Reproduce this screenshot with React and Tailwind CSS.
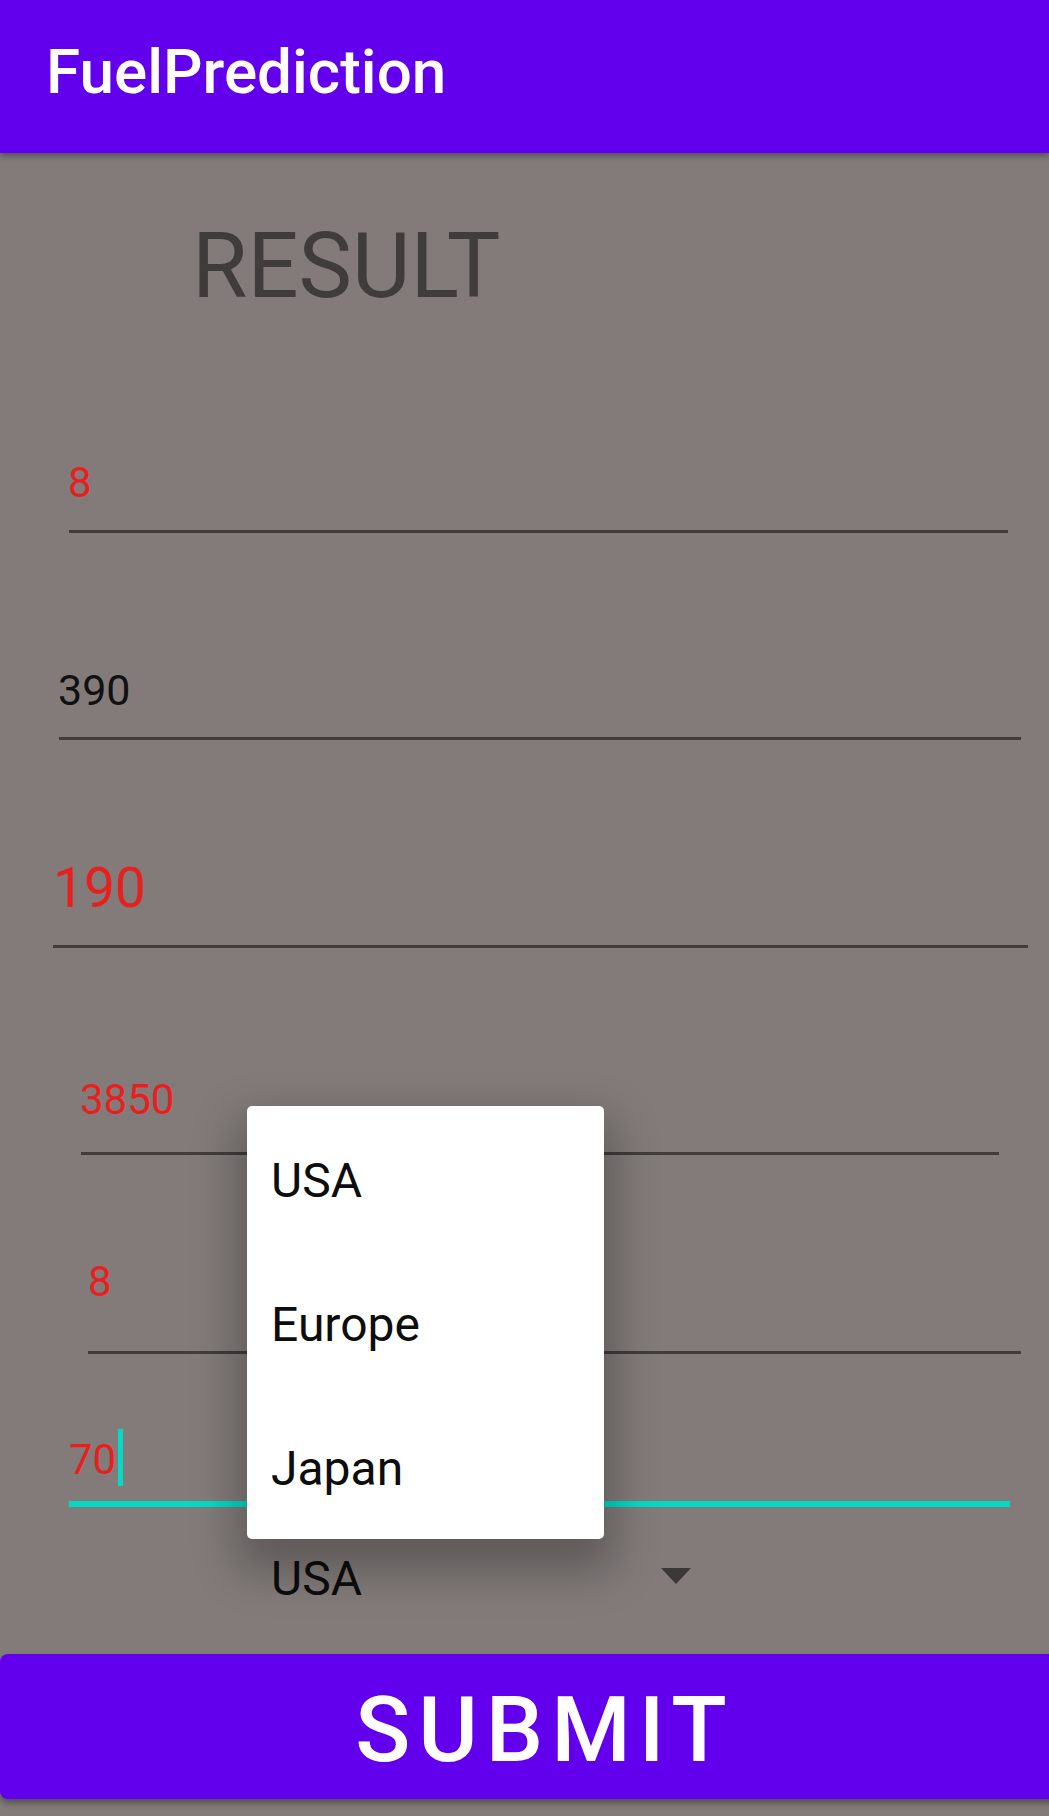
import React from "react";

const red = "text-[#e81f1f]";

function Line({ className }) {
  return <div className={className} />;
}

export default function App() {
  return (
    <div className="relative w-[1049px] h-[1816px] overflow-hidden bg-[#827b7a] font-['Roboto','Liberation_Sans',sans-serif]">
      <header className="relative z-10 h-[153px] bg-[#6200ee] shadow-[0_3px_6px_rgba(0,0,0,0.35)] pt-[41px] pl-[46px]">
        <div className="text-[62px] leading-none font-medium text-white">FuelPrediction</div>
      </header>

      <main className="flex flex-col">
        <div className="mt-[69px] ml-[192px] text-[90px] leading-none text-[#403c3b]">RESULT</div>

        <div className={`mt-[150px] ml-[68px] text-[42px] leading-none ${red}`}>8</div>
        <Line className="mt-[26px] ml-[69px] w-[939px] h-[3px] bg-[#423c3b]" />

        <div className="mt-[136px] ml-[58px] text-[43px] leading-none text-[#111]">390</div>
        <Line className="mt-[25px] ml-[59px] w-[962px] h-[3px] bg-[#423c3b]" />

        <div className={`mt-[121px] ml-[53px] text-[55px] leading-none ${red}`}>190</div>
        <Line className="mt-[29px] ml-[53px] w-[975px] h-[3px] bg-[#423c3b]" />

        <div className={`mt-[131px] ml-[80px] text-[42px] leading-none ${red}`}>3850</div>
        <Line className="mt-[31px] ml-[81px] w-[918px] h-[3px] bg-[#423c3b]" />

        <div className={`mt-[106px] ml-[88px] text-[42px] leading-none ${red}`}>8</div>
        <Line className="mt-[48px] ml-[88px] w-[933px] h-[3px] bg-[#423c3b]" />

        <div className="mt-[75px] ml-[69px] flex items-start h-[57px]">
          <span className={`mt-[10px] text-[42px] leading-none ${red}`}>70</span>
          <span className="ml-[2px] w-[5px] h-[57px] bg-[#03dac5]" />
        </div>
        <Line className="mt-[15px] ml-[69px] w-[941px] h-[6px] bg-[#03dac5]" />

        <div className="mt-[48px] ml-[271px] flex items-start">
          <span className="w-[390px] text-[48px] leading-none text-[#0d0d0d]">USA</span>
          <svg className="mt-[13px]" width="30" height="16" viewBox="0 0 30 16">
            <path d="M0 0 L30 0 L15 16 Z" fill="#3d3838" />
          </svg>
        </div>

        <button className="mt-[51px] w-[1082px] h-[145px] shrink-0 rounded-[8px] bg-[#6200ee] shadow-[0_4px_6px_rgba(0,0,0,0.35)] flex items-center justify-center pt-[8px]">
          <span className="text-[91px] leading-none font-medium tracking-[8px] text-white pl-[8px]">SUBMIT</span>
        </button>
      </main>

      <div className="absolute left-[247px] top-[1106px] w-[357px] h-[433px] rounded-[5px] bg-white shadow-[0_22px_45px_10px_rgba(0,0,0,0.28)] flex flex-col z-20">
        {["USA", "Europe", "Japan"].map((t) => (
          <div key={t} className="h-[144px] flex items-center pl-[24px] pt-[5px] text-[48px] leading-none text-[#0d0d0d]">
            {t}
          </div>
        ))}
      </div>
    </div>
  );
}
